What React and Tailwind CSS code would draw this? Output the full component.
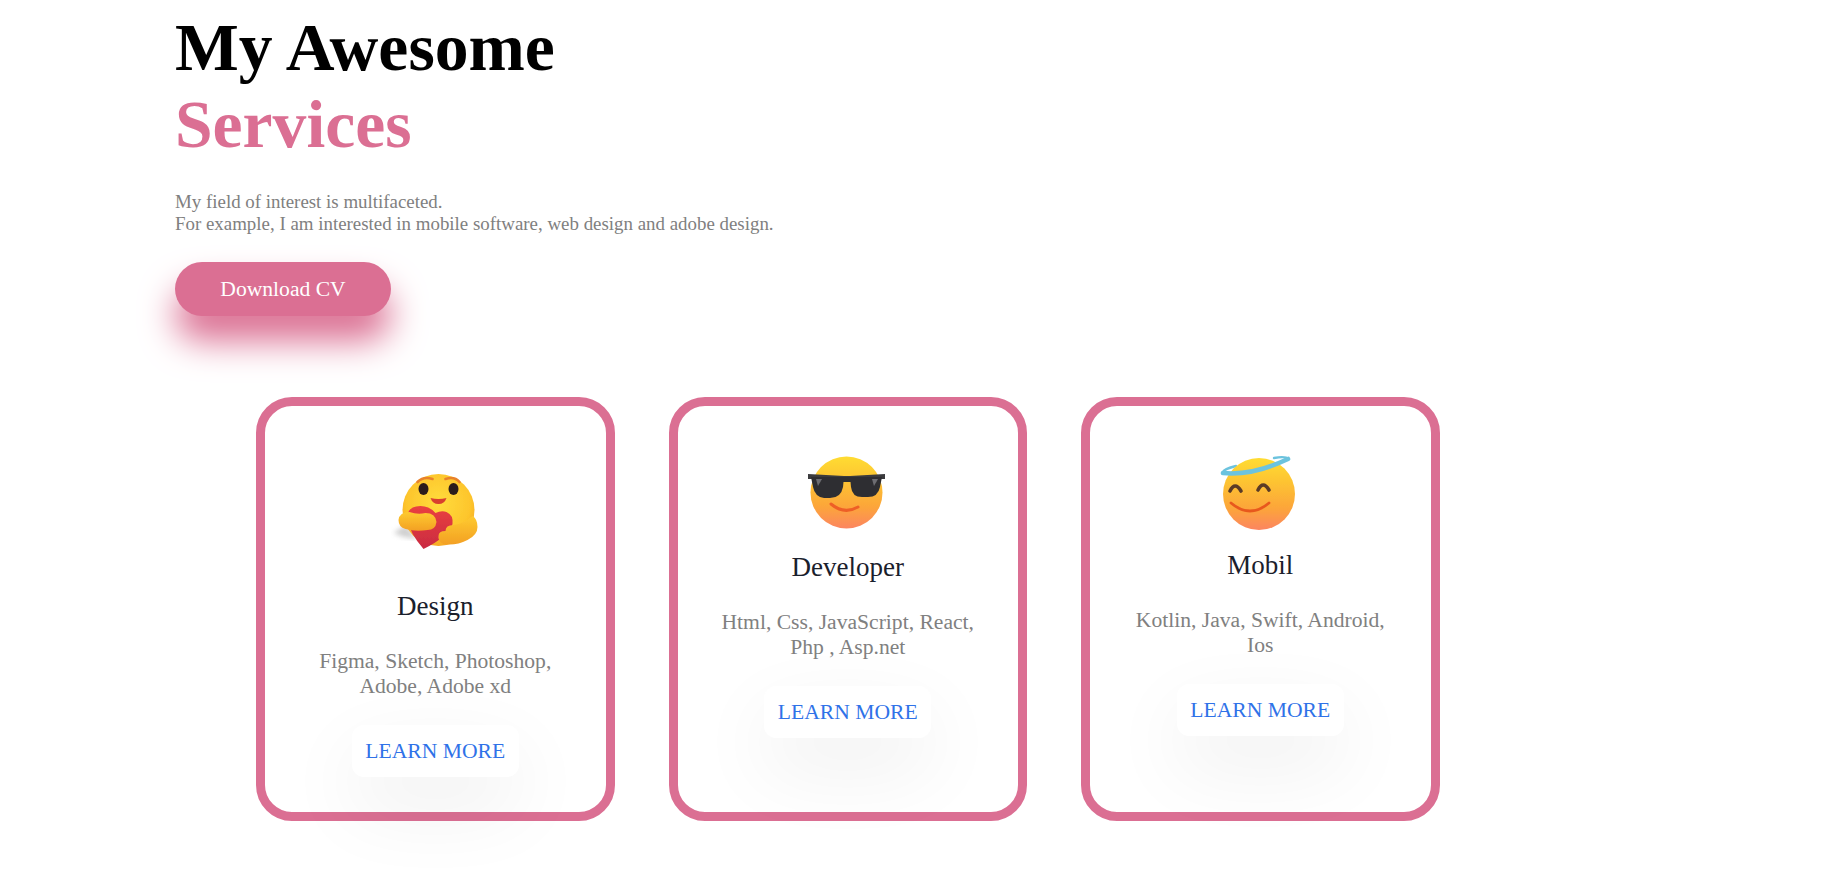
const HugEmoji = () => (
  <svg width="160" height="130" viewBox="-4.5 0 160 130" className="block shrink-0">
    <defs>
      <radialGradient id="hugHead" cx="50%" cy="40%" r="60%">
        <stop offset="0%" stopColor="#ffdc3c" />
        <stop offset="75%" stopColor="#fdc52c" />
        <stop offset="100%" stopColor="#f6a825" />
      </radialGradient>
      <linearGradient id="hugArm" x1="0" y1="0" x2="0" y2="1">
        <stop offset="0%" stopColor="#fecb30" />
        <stop offset="100%" stopColor="#f3a024" />
      </linearGradient>
      <linearGradient id="hugHeart" x1="0" y1="0" x2="0" y2="1">
        <stop offset="0%" stopColor="#ea4040" />
        <stop offset="100%" stopColor="#c92a42" />
      </linearGradient>
      <filter id="hugSoft"><feGaussianBlur stdDeviation="0.5" /></filter>
      <filter id="hugShadow"><feGaussianBlur stdDeviation="2.5" /></filter>
    </defs>
    <path d="M34 92 L46 84 L58 98 L44 96 Z" fill="#a0a0a0" opacity="0.5" filter="url(#hugShadow)" />
    <g filter="url(#hugSoft)">
      <ellipse cx="79" cy="69" rx="36" ry="36" fill="url(#hugHead)" />
      <path d="M58 41 Q64 35 73 38" stroke="#e8822c" strokeWidth="2.6" fill="none" strokeLinecap="round" />
      <path d="M86 38 Q95 35 100 41" stroke="#e8822c" strokeWidth="2.6" fill="none" strokeLinecap="round" />
      <ellipse cx="64" cy="48" rx="5" ry="6" fill="#2b1a1a" />
      <ellipse cx="94" cy="48" rx="5" ry="6" fill="#2b1a1a" />
      <path d="M71 57 Q79 59 87 57 Q85 63 79 63 Q73 63 71 57 Z" fill="#d8412f" />
      <path d="M64 108 Q50 92 48 78 Q47 65 61 65 Q70 65 76 72 Q82 69 87 71 Q94 74 93 83 Q90 95 64 108 Z" fill="url(#hugHeart)" />
      <path d="M39 79 Q40 71 50 71 Q58 74 66 72 Q76 72 77 81 Q76 89 68 89 Q56 91 46 88 Q39 86 39 79 Z" fill="url(#hugArm)" />
      <path d="M118 86 Q118 94 108 99 Q96 105 84 103 Q78 100 79 95 Q79 90 86 90 Q86 84 94 84 Q104 83 113 75 Q118 78 118 86 Z" fill="url(#hugArm)" />
    </g>
  </svg>
);

const CoolEmoji = () => (
  <svg width="130" height="110" viewBox="3 0 130 110" className="block shrink-0">
    <defs>
      <linearGradient id="coolFace" x1="0" y1="0" x2="0" y2="1">
        <stop offset="0%" stopColor="#ffdc32" />
        <stop offset="35%" stopColor="#fdc233" />
        <stop offset="70%" stopColor="#fca53a" />
        <stop offset="100%" stopColor="#fc8560" />
      </linearGradient>
      <filter id="coolSoft"><feGaussianBlur stdDeviation="0.5" /></filter>
    </defs>
    <g filter="url(#coolSoft)">
      <circle cx="66.5" cy="51.5" r="36" fill="url(#coolFace)" />
      <path d="M28 33 L64 35 L70 35 L105 33 L105 38 L28 38 Z" fill="#3a3a3e" />
      <path d="M31 36 L64 36 L63 46 Q61 57 50 57 L44 57 Q35 56 33 46 Z" fill="#2f2f33" />
      <path d="M70 36 L102 36 L100 46 Q98 56 88 56 L82 56 Q72 56 71 46 Z" fill="#2f2f33" />
      <path d="M62 36 L72 36 L72 41 L62 41 Z" fill="#2f2f33" />
      <path d="M92 38 L98 38 L94 45 Z" fill="#6d6d72" />
      <path d="M36 38 L42 38 L38 45 Z" fill="#6d6d72" />
      <path d="M51 63 Q64 74 78 66" stroke="#ee5f28" strokeWidth="3" fill="none" strokeLinecap="round" />
    </g>
  </svg>
);

const HaloEmoji = () => (
  <svg width="120" height="100" viewBox="0 0 120 100" className="block shrink-0">
    <defs>
      <linearGradient id="haloFace" x1="0" y1="0" x2="0" y2="1">
        <stop offset="0%" stopColor="#ffdc32" />
        <stop offset="35%" stopColor="#fdc233" />
        <stop offset="70%" stopColor="#fca53a" />
        <stop offset="100%" stopColor="#fc8560" />
      </linearGradient>
      <filter id="haloSoft"><feGaussianBlur stdDeviation="0.5" /></filter>
    </defs>
    <g filter="url(#haloSoft)">
      <path d="M23 31 Q24 28 36 25" stroke="#6cc3de" strokeWidth="2.4" fill="none" strokeLinecap="round" />
      <path d="M74 17 Q86 15 88 18" stroke="#6cc3de" strokeWidth="2.4" fill="none" strokeLinecap="round" />
      <circle cx="59" cy="53" r="36" fill="url(#haloFace)" />
      <path d="M23 32 Q52 35 88 18" stroke="#6cc3de" strokeWidth="4.6" fill="none" strokeLinecap="round" />
      <path d="M30 50 Q35 40 41 50" stroke="#5a3a28" strokeWidth="3.6" fill="none" strokeLinecap="round" />
      <path d="M58 49 Q63 39 69 49" stroke="#5a3a28" strokeWidth="3.6" fill="none" strokeLinecap="round" />
      <path d="M31 62 Q50 78 69 62" stroke="#e8591f" strokeWidth="2.8" fill="none" strokeLinecap="round" />
    </g>
  </svg>
);

const services = [
  { title: 'Design', lines: ['Figma, Sketch, Photoshop,', 'Adobe, Adobe xd'], Icon: HugEmoji, titleGap: 'mt-[20px]' },
  { title: 'Developer', lines: ['Html, Css, JavaScript, React,', 'Php , Asp.net'], Icon: CoolEmoji, titleGap: 'mt-px' },
  { title: 'Mobil', lines: ['Kotlin, Java, Swift, Android,', 'Ios'], Icon: HaloEmoji, titleGap: 'mt-[9px]' },
];

const ServiceCard = ({ title, lines, Icon, titleGap }) => (
  <div className="flex h-[424px] w-[358.5px] flex-col items-center rounded-[36px] border-[9px] border-[#db6f93] pt-[35px]">
    <Icon />
    <h3 className={`${titleGap} text-[27px] leading-[31px] text-[#1a202c]`}>{title}</h3>
    <p className="mt-[27px] text-center text-[21.6px] leading-[25px] text-[#808080]">
      {lines[0]}
      <br />
      {lines[1]}
    </p>
    <a className="mt-[26px] flex h-[52px] w-[167px] items-center justify-center rounded-xl bg-white text-[21.6px] text-[#2f72e8] shadow-[0_30px_80px_rgba(0,0,0,0.07)]">
      LEARN MORE
    </a>
  </div>
);

const App = () => (
  <div className="h-[892px] overflow-hidden bg-white font-['Liberation_Serif',serif]">
    <div className="pl-[175px] pt-[9px]">
      <h1 className="text-[67.6px] font-bold leading-[77px] text-black">
        My Awesome
        <br />
        <span className="text-[#db6f93]">Services</span>
      </h1>
      <p className="mt-[28px] text-[18.9px] leading-[22px] text-[#808080]">
        My field of interest is multifaceted.
        <br />
        For example, I am interested in mobile software, web design and adobe design.
      </p>
      <button className="mt-[27px] flex h-[54px] w-[216px] items-center justify-center rounded-[27px] bg-[#db6f93] text-[21.6px] text-white shadow-[0_25px_35px_rgba(219,112,147,1)]">
        Download CV
      </button>
    </div>
    <div className="ml-[256px] mt-[81px] flex gap-[54px]">
      {services.map((service) => (
        <ServiceCard key={service.title} {...service} />
      ))}
    </div>
  </div>
);

export default App;
